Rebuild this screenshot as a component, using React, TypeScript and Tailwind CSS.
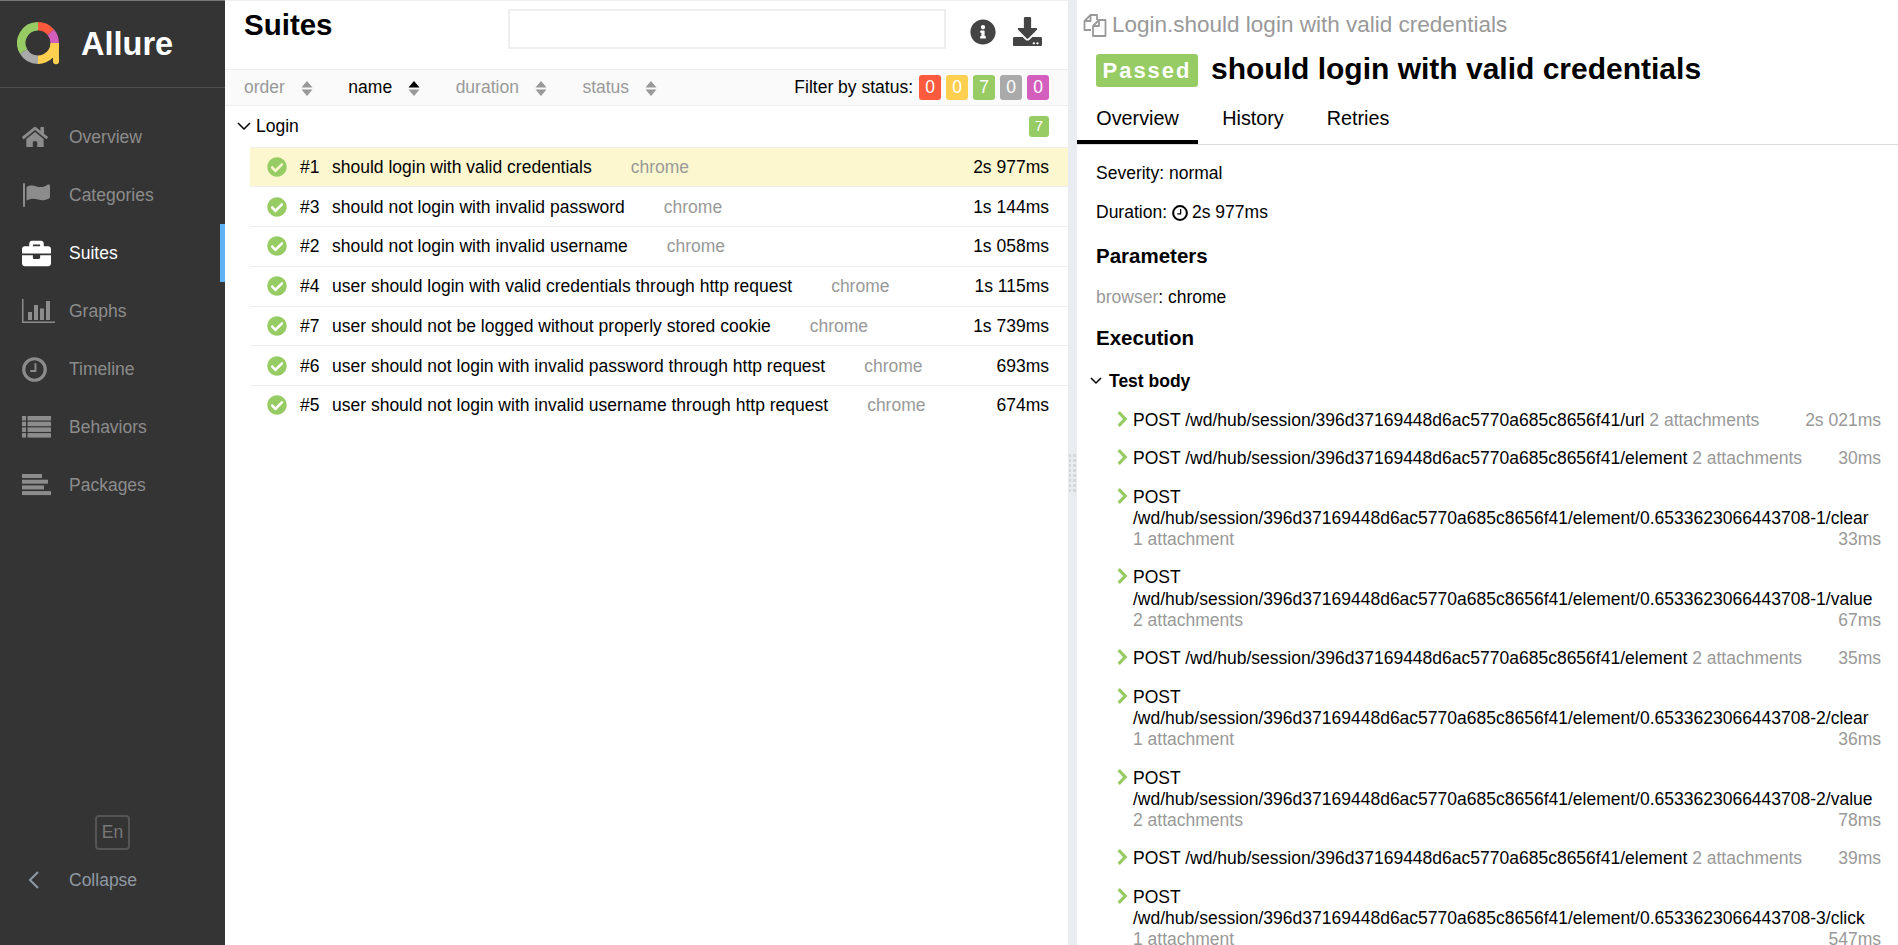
import { FaHome, FaBriefcase, FaInfoCircle, FaDownload, FaCheckCircle } from 'react-icons/fa'

const font = { fontFamily: '"Liberation Sans", Arial, sans-serif' }

const tests = [
  { id: '#1', name: 'should login with valid credentials', time: '2s 977ms', active: true },
  { id: '#3', name: 'should not login with invalid password', time: '1s 144ms' },
  { id: '#2', name: 'should not login with invalid username', time: '1s 058ms' },
  { id: '#4', name: 'user should login with valid credentials through http request', time: '1s 115ms' },
  { id: '#7', name: 'user should not be logged without properly stored cookie', time: '1s 739ms' },
  { id: '#6', name: 'user should not login with invalid password through http request', time: '693ms' },
  { id: '#5', name: 'user should not login with invalid username through http request', time: '674ms' },
]

const S = '/wd/hub/session/396d37169448d6ac5770a685c8656f41'
const steps = [
  { text: `POST ${S}/url`, att: '2 attachments', time: '2s 021ms' },
  { text: `POST ${S}/element`, att: '2 attachments', time: '30ms' },
  { line1: 'POST', text: `${S}/element/0.6533623066443708-1/clear`, att: '1 attachment', time: '33ms' },
  { line1: 'POST', text: `${S}/element/0.6533623066443708-1/value`, att: '2 attachments', time: '67ms' },
  { text: `POST ${S}/element`, att: '2 attachments', time: '35ms' },
  { line1: 'POST', text: `${S}/element/0.6533623066443708-2/clear`, att: '1 attachment', time: '36ms' },
  { line1: 'POST', text: `${S}/element/0.6533623066443708-2/value`, att: '2 attachments', time: '78ms' },
  { text: `POST ${S}/element`, att: '2 attachments', time: '39ms' },
  { line1: 'POST', text: `${S}/element/0.6533623066443708-3/click`, att: '1 attachment', time: '547ms' },
]

function Logo() {
  const arc = (a: number, b: number) => {
    const p = (d: number) => {
      const r = ((d - 90) * Math.PI) / 180
      return `${21 + 16.700 * Math.cos(r)} ${21 + 16.700 * Math.sin(r)}`
    }
    return `M${p(a)} A16.700 16.700 0 ${b - a > 180 ? 1 : 0} 1 ${p(b)}`
  }
  return (
    <svg width="44" height="44" viewBox="0 0 44 44" fill="none" strokeWidth="8.500">
      <path d={arc(0, 50)} stroke="#fd5a3e" />
      <path d={arc(50, 90)} stroke="#d35ebe" />
      <path d={arc(90, 180)} stroke="#ffd050" />
      <path d={arc(180, 240)} stroke="#aaaaaa" />
      <path d={arc(240, 360)} stroke="#97cc64" />
      <path d="M33.500 21H42v18a3 3 0 0 1-6 .5V35l-2-1z" fill="#ffd050" />
    </svg>
  )
}

const FlagIcon = () => (
  <svg width="29" height="24" viewBox="0 0 29 24" fill="currentColor">
    <rect x="1" y="0" width="2" height="24" rx="1" />
    <path d="M4.500 4c4-2.500 7-1.500 10-.5s7 1 10.500-1.500c1.500-.7 3-.5 3 1v11c0 .7-.3 1.200-1 1.500-4 2.300-8 2-11 1s-7-1.500-11.500 1z" />
  </svg>
)
const ChartIcon = () => (
  <svg width="33" height="24" viewBox="0 0 33 24" fill="currentColor">
    <path d="M0 0h1.500v22.500H33V24H0z" />
    <rect x="6" y="13" width="4" height="8" />
    <rect x="12" y="6" width="4" height="15" />
    <rect x="18" y="9.500" width="4" height="11.500" />
    <rect x="24" y="2" width="4" height="19" />
  </svg>
)
const ClockIcon = ({ size = 25 }: { size?: number }) => (
  <svg width={size} height={size} viewBox="0 0 26 26" fill="none" stroke="currentColor">
    <circle cx="13" cy="13" r="11.200" strokeWidth="3.300" />
    <path d="M14 6.500V14.500H8.500" strokeWidth="2" />
  </svg>
)
const ListIcon = () => (
  <svg width="29" height="22" viewBox="0 0 29 22" fill="currentColor">
    {[0, 5.700, 11.400, 17.100].map((y) => (
      <g key={y}>
        <rect x="0" y={y} width="4" height="4.500" />
        <rect x="5.500" y={y} width="23.500" height="4.500" />
      </g>
    ))}
  </svg>
)
const PackagesIcon = () => (
  <svg width="29" height="22" viewBox="0 0 29 22" fill="currentColor">
    <rect x="0" y="0" width="20" height="4" />
    <rect x="0" y="5.700" width="26" height="4" />
    <rect x="0" y="11.400" width="22" height="4" />
    <rect x="0" y="17.100" width="29" height="4" />
  </svg>
)
const FilesIcon = () => (
  <svg width="24" height="24" viewBox="0 0 24 24" fill="none" stroke="currentColor" strokeWidth="1.800" strokeLinejoin="round">
    <path d="M8 17H1.500V8L7.500 2H14V7" />
    <path d="M7.500 2V8H1.500" />
    <path d="M10 23V13L16 7H22.500V23z" fill="#fff" />
    <path d="M16 7V13H10" />
  </svg>
)
const StepChevron = () => (
  <svg width="11" height="16" viewBox="0 0 11 16" className="text-[#97cc64] mr-[5px] mt-[1px] shrink-0" fill="currentColor">
    <path d="M2.800 0L10.500 8L2.800 16L0.500 13.700L6 8L0.500 2.300z" />
  </svg>
)

const nav = [
  { label: 'Overview', icon: <FaHome size={26} /> },
  { label: 'Categories', icon: <FlagIcon /> },
  { label: 'Suites', icon: <FaBriefcase size={29} />, active: true },
  { label: 'Graphs', icon: <ChartIcon /> },
  { label: 'Timeline', icon: <ClockIcon /> },
  { label: 'Behaviors', icon: <ListIcon /> },
  { label: 'Packages', icon: <PackagesIcon /> },
]

function Sort({ label, on }: { label: string; on?: boolean }) {
  return (
    <span className={`flex items-center gap-[16px] ${on ? 'text-black' : 'text-[#999]'}`}>
      {label}
      <svg width="12" height="15" viewBox="0 0 12 15" className="mt-[1px]">
        <path d="M6 0l5.500 6.500H.5z" fill={on ? '#000' : '#999'} />
        <path d="M6 15L.5 8.500h11z" fill="#999" />
      </svg>
    </span>
  )
}

function Badge({ color, n }: { color: string; n: number }) {
  return <span className={`w-[22px] h-[25px] rounded-[3px] text-white text-[17.500px] flex items-center justify-center ${color}`}>{n}</span>
}

export default function App() {
  return (
    <div style={font} className="flex h-[945px] overflow-hidden bg-white text-[17.500px] text-black">
      {/* Sidebar */}
      <aside className="w-[225px] shrink-0 bg-[#343434] flex flex-col border-t border-[#777]">
        <div className="h-[87px] shrink-0 border-b border-[#4e4e4e] flex items-center pl-[17px] gap-[20px]">
          <Logo />
          <span className="text-[32.500px] font-bold text-white">Allure</span>
        </div>
        <nav className="pt-[20px] flex-1">
          {nav.map((n) => (
            <div key={n.label} className={`h-[58px] flex items-center pl-[22px] relative ${n.active ? 'text-white' : 'text-[#8c8c8c]'}`}>
              <span className="w-[47px] flex justify-start">{n.icon}</span>
              <span className="text-[17.500px]">{n.label}</span>
              {n.active && <span className="absolute right-0 top-0 bottom-0 w-[5px] bg-[#5eb3f6]" />}
            </div>
          ))}
        </nav>
        <div className="flex justify-center pb-[41px] flex-col">
          <div className="w-[35px] h-[35px] ml-[95px] border-2 border-[#555] rounded-[4px] text-[#777] flex items-center justify-center text-[17.500px]">En</div>
          <div className="flex items-center h-[48px] mt-[6px] pl-[28px] text-[#8f99a3] text-[17.500px]">
            <svg width="12" height="18" viewBox="0 0 12 18" fill="none" stroke="currentColor" strokeWidth="2" className="mr-[29px]"><path d="M10 1L2 9l8 8" /></svg>
            Collapse
          </div>
        </div>
      </aside>

      {/* List pane */}
      <main className="w-[843px] shrink-0 flex flex-col border-t border-[#eee]">
        <div className="h-[68px] shrink-0 flex items-start pl-[19px] relative">
          <h2 className="text-[29.500px] font-bold mt-[6px] leading-[36px]">Suites</h2>
          <div className="absolute left-[283px] top-[8px] w-[438px] h-[40px] border-2 border-[#eee]" />
          <FaInfoCircle size={26} className="absolute left-[745px] top-[18px] text-[#444]" />
          <FaDownload size={29} className="absolute left-[788px] top-[16px] text-[#444]" />
        </div>
        <div className="h-[37px] shrink-0 bg-[#fafafa] border-y border-[#eee] flex items-center pl-[19px] pr-[19px]">
          <div className="flex gap-[35.500px]">
            <Sort label="order" />
            <Sort label="name" on />
            <Sort label="duration" />
            <Sort label="status" />
          </div>
          <div className="ml-auto flex items-center gap-[5px]">
            <span className="mr-[1px]">Filter by status:</span>
            <Badge color="bg-[#fd5a3e]" n={0} />
            <Badge color="bg-[#ffd050]" n={0} />
            <Badge color="bg-[#97cc64]" n={7} />
            <Badge color="bg-[#aaaaaa]" n={0} />
            <Badge color="bg-[#d35ebe]" n={0} />
          </div>
        </div>
        <div className="h-[40.500px] shrink-0 flex items-center pl-[12px] pr-[19px]">
          <svg width="14" height="9" viewBox="0 0 14 9" fill="none" stroke="currentColor" strokeWidth="1.500" className="mr-[5px]"><path d="M1 1l6 6 6-6" /></svg>
          Login
          <span className="ml-auto w-[20px] h-[21px] bg-[#97cc64] rounded-[3px] text-white text-[15px] flex items-center justify-center">7</span>
        </div>
        <div className="ml-[25px]">
          {tests.map((t) => (
            <div key={t.id} className={`h-[39.750px] flex items-center pl-[17px] pr-[19px] border-t border-[#eee] ${t.active ? 'bg-[#fdf7cf]' : ''}`}>
              <FaCheckCircle size={20} className="text-[#97cc64] mr-[13px]" />
              <span className="w-[32px]">{t.id}</span>
              <span>{t.name}</span>
              <span className="text-[#999] ml-[39px]">chrome</span>
              <span className="ml-auto">{t.time}</span>
            </div>
          ))}
        </div>
      </main>

      {/* Splitter */}
      <div className="w-[9px] shrink-0 bg-[#e9edf1] flex items-center justify-center">
        <div className="grid grid-cols-[2px_3px] gap-x-[2px] gap-y-[2px]">
          {Array.from({ length: 16 }).map((_, i) => (
            <span key={i} className="h-[3px] bg-[#d4d7da]" />
          ))}
        </div>
      </div>

      {/* Detail pane */}
      <section className="flex-1 min-w-0 overflow-hidden">
        <div className="pl-[6px] pr-[19px] pt-[10px] flex items-center text-[#999] text-[22.500px] h-[40px]">
          <span className="mr-[5px]"><FilesIcon /></span>
          Login.should login with valid credentials
        </div>
        <div className="pl-[19px] flex items-center h-[44px] gap-[13px] mt-[8px]">
          <span className="bg-[#97cc64] text-white font-bold text-[22px] rounded-[3px] h-[33px] w-[102px] flex items-center justify-center tracking-[2px]">Passed</span>
          <span className="text-[30px] font-bold -mt-[3px]">should login with valid credentials</span>
        </div>
        <div className="h-[53px] border-b border-[#ddd] flex text-[19.800px]">
          <div className="w-[121px] flex items-center justify-center border-b-[4px] border-black pt-[6px]">Overview</div>
          <div className="w-[110px] flex items-center justify-center pt-[2px]">History</div>
          <div className="w-[100px] flex items-center justify-center pt-[2px]">Retries</div>
        </div>
        <div className="pl-[19px] pt-[17.500px] leading-[21px]">
          <p>Severity: normal</p>
          <p className="mt-[18.500px] flex items-center">Duration:<span className="ml-[5px] mr-[4px]"><ClockIcon size={16} /></span>2s 977ms</p>
          <h3 className="font-bold text-[20.500px] leading-[24px] mt-[20.500px]">Parameters</h3>
          <p className="mt-[19px]"><span className="text-[#999]">browser</span>: chrome</p>
          <h3 className="font-bold text-[20.500px] leading-[24px] mt-[18.700px]">Execution</h3>
        </div>
        <div className="pl-[13px] pr-[17px] mt-[20px]">
          <div className="flex items-center font-bold h-[22px]">
            <svg width="12" height="8" viewBox="0 0 12 8" fill="none" stroke="currentColor" strokeWidth="1.500" className="mr-[7px]"><path d="M1 1l5 5 5-5" /></svg>
            Test body
          </div>
          <div className="mt-[17.500px]">
            {steps.map((s, i) => (
              <div key={i} className="flex pl-[27px] mb-[17.400px]">
                <StepChevron />
                <div className="flex-1 min-w-0 leading-[21.120px]">
                  {s.line1 ? (
                    <>
                      <div>{s.line1}</div>
                      <div className="whitespace-nowrap">{s.text}</div>
                      <div className="flex justify-between text-[#999]"><span>{s.att}</span><span>{s.time}</span></div>
                    </>
                  ) : (
                    <div className="flex justify-between whitespace-nowrap">
                      <span>{s.text} <span className="text-[#999]">{s.att}</span></span>
                      <span className="text-[#999]">{s.time}</span>
                    </div>
                  )}
                </div>
              </div>
            ))}
          </div>
        </div>
      </section>
    </div>
  )
}
